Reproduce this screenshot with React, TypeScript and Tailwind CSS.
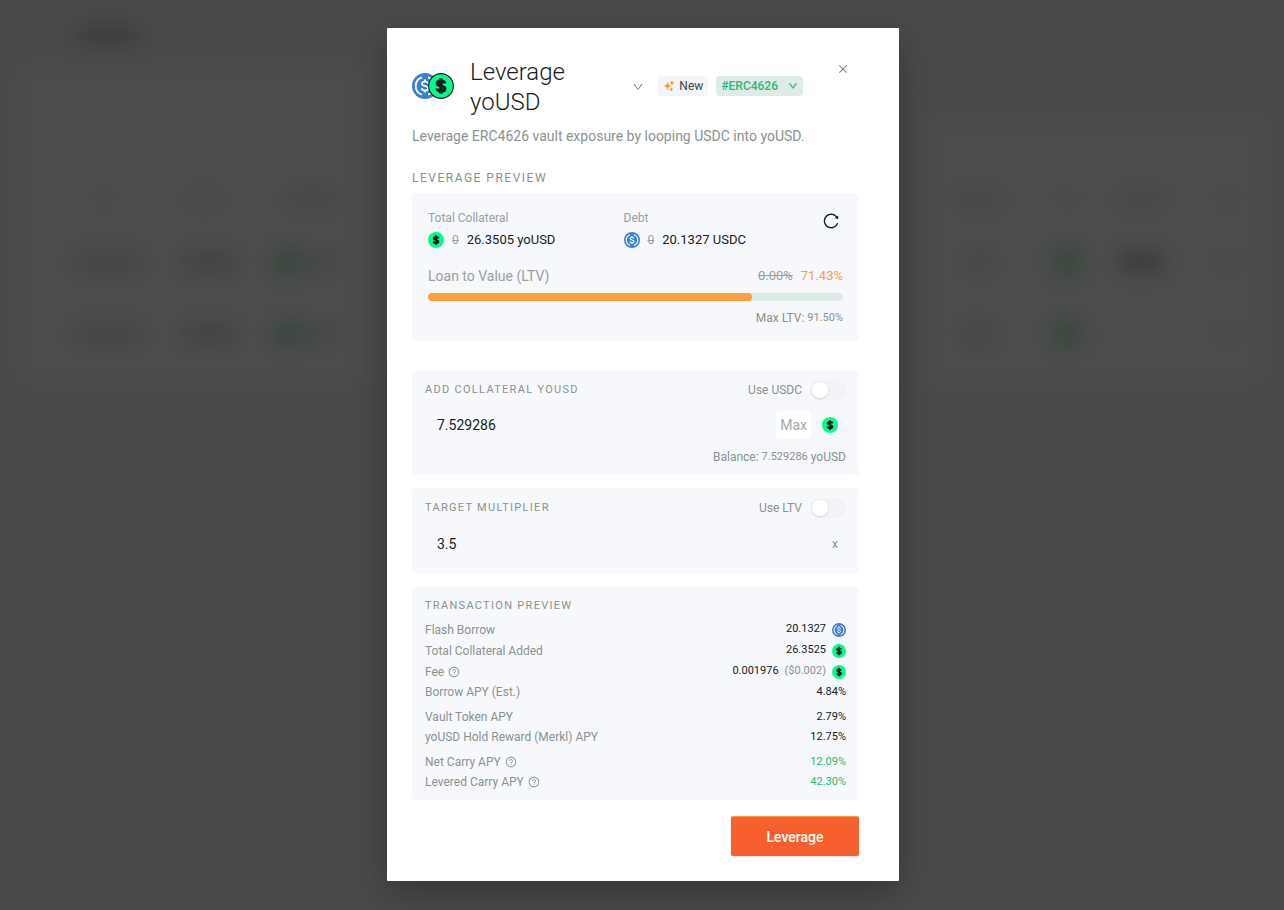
import { useState, type ReactNode } from "react";
import {
  AiOutlineClose,
  AiOutlineDown,
  AiOutlineQuestionCircle,
  AiOutlineReload,
} from "react-icons/ai";
import { HiSparkles } from "react-icons/hi2";

function UsdcCoin({ className }: { className: string }) {
  return (
    <svg viewBox="0 0 32 32" className={className} fill="none" aria-hidden="true">
      <circle cx="16" cy="16" r="16" fill="#3e7fd0" />
      <path
        d="M12.2 5.3a11.3 11.3 0 0 0 0 21.4M19.8 5.3a11.3 11.3 0 0 1 0 21.4"
        stroke="#fff"
        strokeWidth="2.2"
      />
      <path
        d="M19.8 13.2c-.3-1.8-1.7-2.7-3.8-2.7-2.2 0-3.7 1-3.7 2.7 0 3.8 7.6 1.8 7.6 5.6 0 1.8-1.6 2.8-3.9 2.8-2.3 0-3.8-1-4.1-2.9M16 8v2.5M16 21.6v2.4"
        stroke="#fff"
        strokeWidth="2.2"
      />
    </svg>
  );
}

function YoCoin({ className, outlined }: { className: string; outlined?: boolean }) {
  return (
    <svg viewBox="0 0 32 32" className={className} fill="none" aria-hidden="true">
      <circle
        cx="16"
        cy="16"
        r={outlined ? 15.2 : 16}
        fill="#05fb8c"
        stroke="#1b2623"
        strokeWidth={outlined ? 1.4 : 0}
      />
      <path
        d="M20.6 12.9c-.3-2-2-2.9-4.6-2.9-2.8 0-4.6 1.1-4.6 3 0 4 9.3 2 9.3 6 0 2-1.900 3.200-4.700 3.200-2.900 0-4.700-1.200-4.900-3.300M16 6.500v19"
        stroke="#14211d"
        strokeWidth="4"
      />
    </svg>
  );
}

function Toggle({ id, label }: { id: string; label: string }) {
  const [on, setOn] = useState(false);
  return (
    <div className="flex items-center gap-2">
      <label htmlFor={id} className="text-xs text-[#8a9290]">
        {label}
      </label>
      <input
        id={id}
        type="checkbox"
        role="switch"
        checked={on}
        onChange={() => setOn(!on)}
        className="h-5 w-9 cursor-pointer appearance-none rounded-full bg-[#f1f3f4] p-0.5 before:block before:size-4 before:rounded-full before:bg-white before:shadow-sm checked:bg-[#2cb876] checked:before:translate-x-4"
      />
    </div>
  );
}

function Amount({ label, from, value, coin }: { label: string; from: string; value: string; coin: ReactNode }) {
  return (
    <div className="flex-1">
      <div className="text-xs leading-[18px] text-[#98a09e]">{label}</div>
      <div className="flex h-[26px] items-center gap-2">
        {coin}
        <del className="text-xs text-[#98a09e]">{from}</del>
        <span className="text-[13px] text-[#16211e]">{value}</span>
      </div>
    </div>
  );
}

type RowProps = { label: string; help?: boolean; tone?: string; children: ReactNode };

function Row({ label, help, tone = "text-[#16211e]", children }: RowProps) {
  return (
    <div className="flex min-h-5 items-center justify-between text-xs">
      <dt className="flex items-center gap-1 text-[#8a9290]">
        {label}
        {help && (
          <button type="button" aria-label={`About ${label}`}>
            <AiOutlineQuestionCircle className="size-3" />
          </button>
        )}
      </dt>
      <dd className={`flex items-center gap-1.5 text-[11px] ${tone}`}>{children}</dd>
    </div>
  );
}

const sectionTitle = "font-normal uppercase text-[#8a9290]";
const field = "min-w-0 flex-1 bg-transparent pl-3 text-sm text-[#16211e] outline-none";
const backdropCard = "flex flex-col justify-end rounded-2xl bg-[#4b4c4b] pb-[18px]";
const backdropGrid = "grid grid-cols-[34%_16%_26%_24%] place-items-center";

function Backdrop() {
  return (
    <div aria-hidden="true" className="absolute inset-0 overflow-hidden bg-[#48494b]">
      <div className="flex h-15 items-center pl-19 blur-[9px]">
        <div className="mt-2 h-5 w-16 rounded-full bg-[#403d3f]" />
      </div>
      <div className="flex items-end justify-between px-3 blur-[9px]">
        <div className={`${backdropCard} h-[328px] w-[358px]`}>
          <div className="flex h-[54px] items-center justify-around pl-12">
            <div className="h-3 w-6 rounded-full bg-[#494a4a]" />
            <div className="h-5 w-8 rounded-full bg-[#484a4a]" />
            <div className="h-5 w-12 rounded-full bg-[#464849]" />
          </div>
          {["first", "second"].map((row) => (
            <div key={row} className="flex h-[72px] items-center justify-between pr-8 pl-15">
              <div className="h-6 w-[72px] rounded-full bg-[#454648]" />
              <div className="h-6 w-14 rounded-full bg-[#434446]" />
              <div className="flex items-center">
                <div className="size-7 rounded-full bg-[#38473e]" />
                <div className="h-5 w-9 rounded-full bg-[#444648]" />
              </div>
            </div>
          ))}
        </div>
        <div className={`${backdropCard} h-[276px] w-[354px]`}>
          <div className={`${backdropGrid} h-[54px]`}>
            <div className="h-5 w-12 rounded-full bg-[#474849]" />
            <div className="h-3 w-6 rounded-full bg-[#494b49]" />
            <div className="h-5 w-12 rounded-full bg-[#474849]" />
            <div className="h-3 w-8 rounded-full bg-[#494b49]" />
          </div>
          <div className={`${backdropGrid} h-[72px]`}>
            <div className="h-5 w-8 rounded-full bg-[#464849]" />
            <div className="size-8 rounded-full bg-[#3a483f]" />
            <div className="h-6 w-12 rounded-full bg-[#3f3e40]" />
            <div className="h-4 w-8 rounded-full bg-[#494b49]" />
          </div>
          <div className={`${backdropGrid} h-[72px]`}>
            <div className="h-6 w-8 rounded-full bg-[#444648]" />
            <div className="size-8 rounded-full bg-[#3a483f]" />
            <div />
            <div className="h-4 w-8 rounded-full bg-[#494b49]" />
          </div>
        </div>
      </div>
    </div>
  );
}

export default function App() {
  const [collateral, setCollateral] = useState("7.529286");
  const [multiplier, setMultiplier] = useState("3.5");

  return (
    <div className="relative flex min-h-screen items-start justify-center bg-[#48494b] py-7 pl-0.5 font-['Roboto','Liberation_Sans',sans-serif]">
      <Backdrop />
      <div
        role="dialog"
        aria-labelledby="dialog-title"
        className="relative w-full max-w-lg rounded-[1px] bg-white pt-[29px] pr-10 pb-[25px] pl-[25px] shadow-[0_12px_32px_rgba(0,0,0,0.25)]"
      >
        <button type="button" aria-label="Close" className="absolute top-[35px] right-[50px] text-[#7d8583]">
          <AiOutlineClose className="size-3" />
        </button>

        <header className="flex items-center pr-14">
          <div className="flex shrink-0 items-center">
            <UsdcCoin className="size-[26px]" />
            <YoCoin className="-ml-[10px] size-[26px]" outlined />
          </div>
          <button type="button" className="-mb-[3px] ml-4 flex flex-1 items-center justify-between text-left text-[#16211e]">
            <h1 id="dialog-title" className="w-28 text-2xl leading-[30px] font-light">
              Leverage yoUSD
            </h1>
            <AiOutlineDown className="size-3 text-[#7d8583]" />
          </button>
          <span className="ml-[14px] flex h-5 items-center gap-1 rounded bg-[#f3f5f8] px-[5px] text-xs text-[#3c4745]">
            <HiSparkles className="size-3 text-[#fb9b3a]" />
            New
          </span>
          <button type="button" className="ml-2 flex h-5 items-center gap-2.5 rounded bg-[#dfebe6] px-[5px] text-xs font-medium text-[#2cb876]">
            #ERC4626
            <AiOutlineDown className="size-[10px] stroke-[60]" />
          </button>
        </header>

        <p className="mt-3 text-sm text-[#8a9290]">
          Leverage ERC4626 vault exposure by looping USDC into yoUSD.
        </p>

        <h2 className={`${sectionTitle} mt-[22px] text-xs leading-5 tracking-[1.5px]`}>Leverage Preview</h2>
        <section className="mt-[5px] rounded bg-[#f7f8fc] px-4 pt-4 pb-[14px]">
          <div className="flex">
            <Amount label="Total Collateral" from="0" value="26.3505 yoUSD" coin={<YoCoin className="size-4" />} />
            <Amount label="Debt" from="0" value="20.1327 USDC" coin={<UsdcCoin className="size-4" />} />
            <button type="button" aria-label="Refresh" className="flex size-6 items-center justify-center text-[#16211e]">
              <AiOutlineReload className="size-[18px]" />
            </button>
          </div>
          <div className="mt-3 flex items-center justify-between">
            <span className="text-sm leading-[22px] text-[#98a09e]">Loan to Value (LTV)</span>
            <span className="flex gap-2 text-[13px]">
              <del className="text-[#98a09e]">0.00%</del>
              <span className="text-[#fb9b3a]">71.43%</span>
            </span>
          </div>
          <div className="mt-1.5 h-2 overflow-hidden rounded-full bg-[#dfebe6]">
            <div className="h-full w-[78%] rounded-full bg-[#ff9f3c]" />
          </div>
          <div className="mt-2 flex items-center justify-end gap-[3px] text-xs leading-[18px] text-[#8a9290]">
            Max LTV: <span className="text-[11px] leading-[18px]">91.50%</span>
          </div>
        </section>

        <section className="mt-[29px] rounded bg-[#f7f8fc] px-[13px] pt-[10px] pb-[9px]">
          <div className="flex items-center justify-between">
            <label htmlFor="collateral" className={`${sectionTitle} text-[11px] leading-5 tracking-[1.3px]`}>
              Add Collateral yoUSD
            </label>
            <Toggle id="use-usdc" label="Use USDC" />
          </div>
          <div className="mt-[11px] flex h-7 items-center pr-2">
            <input id="collateral" className={field} value={collateral} onChange={(e) => setCollateral(e.target.value)} />
            <button
              type="button"
              onClick={() => setCollateral("7.529286")}
              className="mr-[11px] h-7 rounded bg-white px-1 text-sm text-[#a3aaa8]"
            >
              Max
            </button>
            <YoCoin className="size-4" />
          </div>
          <div className="mt-[9px] flex items-center justify-end gap-[3px] text-xs leading-[18px] text-[#8a9290]">
            Balance: <span className="text-[11px] leading-[18px]">7.529286</span> yoUSD
          </div>
        </section>

        <section className="mt-[13px] rounded bg-[#f7f8fc] px-[13px] pt-[10px] pb-[15px]">
          <div className="flex items-center justify-between">
            <label htmlFor="multiplier" className={`${sectionTitle} text-[11px] leading-5 tracking-[1.3px]`}>
              Target Multiplier
            </label>
            <Toggle id="use-ltv" label="Use LTV" />
          </div>
          <div className="mt-3 flex h-7 items-center pr-2">
            <input id="multiplier" className={field} value={multiplier} onChange={(e) => setMultiplier(e.target.value)} />
            <span className="text-xs text-[#8a9290]">x</span>
          </div>
        </section>

        <section className="mt-[13px] rounded bg-[#f7f8fc] px-[13px] pt-[10px] pb-2">
          <h2 className={`${sectionTitle} text-[11px] leading-5 tracking-[1.3px]`}>Transaction Preview</h2>
          <dl className="mt-[3px]">
            <div className="grid auto-rows-[21px]">
              <Row label="Flash Borrow">
                20.1327
                <UsdcCoin className="size-[14px]" />
              </Row>
              <Row label="Total Collateral Added">
                26.3525
                <YoCoin className="size-[14px]" />
              </Row>
              <Row label="Fee" help>
                0.001976
                <span className="text-[#8a9290]">($0.002)</span>
                <YoCoin className="size-[14px]" />
              </Row>
            </div>
            <Row label="Borrow APY (Est.)">4.84%</Row>
            <div className="mt-[5px]">
              <Row label="Vault Token APY">2.79%</Row>
              <Row label="yoUSD Hold Reward (Merkl) APY">12.75%</Row>
            </div>
            <div className="mt-[5px]">
              <Row label="Net Carry APY" help tone="text-[#2cb876]">
                12.09%
              </Row>
              <Row label="Levered Carry APY" help tone="text-[#2cb876]">
                42.30%
              </Row>
            </div>
          </dl>
        </section>

        <div className="mt-4 flex justify-end">
          <button
            type="button"
            className="h-10 w-32 rounded-[2px] border-t border-[#fb9b3a] bg-[#f7602e] text-sm font-medium text-white shadow-sm"
          >
            Leverage
          </button>
        </div>
      </div>
    </div>
  );
}
